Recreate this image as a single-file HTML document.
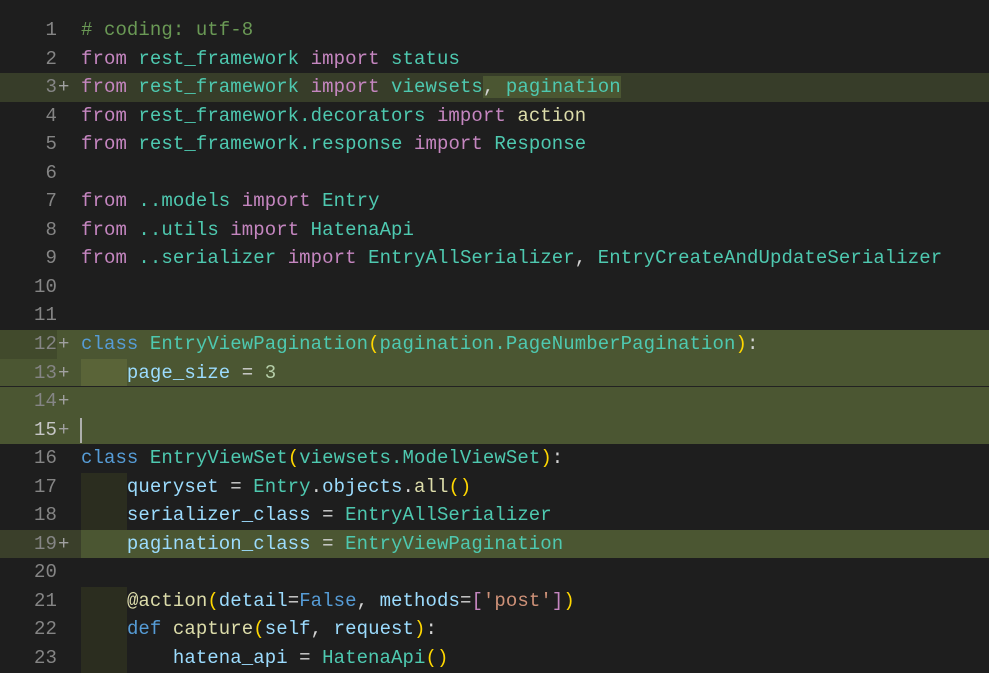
<!DOCTYPE html>
<html><head><meta charset="utf-8"><style>
html,body{margin:0;padding:0;background:#1e1e1e;width:989px;height:653px;overflow:hidden}
.ed{position:absolute;left:0;top:16px;width:989px;font-family:"Liberation Mono",monospace;font-size:19px;letter-spacing:0.08px}
.l{position:relative;height:28.55px;line-height:28.55px;white-space:pre;color:#9cdcfe}
.n{position:absolute;left:0;width:57px;text-align:right;color:#858585}
.p{position:absolute;left:58px;color:#a0a0a0}
.c{position:absolute;left:81px}
.k{color:#c586c0}.m{color:#4ec9b0}.f{color:#dcdcaa}.b{color:#569cd6}.cm{color:#6a9955}.num{color:#b5cea8}.s{color:#ce9178}.y{color:#ffd700}.w{color:#d4d4d4}
.ins{background:#373d29}
.ins2{background:#4b5632}
.g{position:absolute;left:81px;width:46px;top:0;bottom:0;background:#2b2d1f}
</style></head><body><div class="ed">
<div class="l"><span class="n">1</span><span class="c cm"># coding: utf-8</span></div>
<div class="l"><span class="n">2</span><span class="c"><span class="k">from</span> <span class="m">rest_framework</span> <span class="k">import</span> <span class="m">status</span></span></div>
<div class="l ins"><span class="n">3</span><span class="p">+</span><span class="c"><span class="k">from</span> <span class="m">rest_framework</span> <span class="k">import</span> <span class="m">viewsets</span><span class="ins2"><span class="w">,</span> <span class="m">pagination</span></span></span></div>
<div class="l"><span class="n">4</span><span class="c"><span class="k">from</span> <span class="m">rest_framework.decorators</span> <span class="k">import</span> <span class="f">action</span></span></div>
<div class="l"><span class="n">5</span><span class="c"><span class="k">from</span> <span class="m">rest_framework.response</span> <span class="k">import</span> <span class="m">Response</span></span></div>
<div class="l"><span class="n">6</span></div>
<div class="l"><span class="n">7</span><span class="c"><span class="k">from</span> <span class="m">..models</span> <span class="k">import</span> <span class="m">Entry</span></span></div>
<div class="l"><span class="n">8</span><span class="c"><span class="k">from</span> <span class="m">..utils</span> <span class="k">import</span> <span class="m">HatenaApi</span></span></div>
<div class="l"><span class="n">9</span><span class="c"><span class="k">from</span> <span class="m">..serializer</span> <span class="k">import</span> <span class="m">EntryAllSerializer</span><span class="w">,</span> <span class="m">EntryCreateAndUpdateSerializer</span></span></div>
<div class="l"><span class="n">10</span></div>
<div class="l"><span class="n">11</span></div>
<div class="l ins2" style="background:#4b5632"><span class="n" style="background:#414a2c">12</span><span class="p">+</span><span class="c"><span class="b">class</span> <span class="m">EntryViewPagination</span><span class="y">(</span><span class="m">pagination.PageNumberPagination</span><span class="y">)</span><span class="w">:</span></span></div>
<div class="l ins2" style="border-bottom:1px solid #222;height:27.55px"><span class="n">13</span><span class="p">+</span><span class="g" style="background:#5a6438"></span><span class="c">    page_size <span class="w">=</span> <span class="num">3</span></span></div>
<div class="l ins2"><span class="n">14</span><span class="p">+</span></div>
<div class="l ins2"><span class="n" style="color:#c6c6c6">15</span><span class="p">+</span><span style="position:absolute;left:80px;top:2px;width:2px;height:25px;background:#aeafad"></span></div>
<div class="l"><span class="n">16</span><span class="c"><span class="b">class</span> <span class="m">EntryViewSet</span><span class="y">(</span><span class="m">viewsets.ModelViewSet</span><span class="y">)</span><span class="w">:</span></span></div>
<div class="l"><span class="n">17</span><span class="g"></span><span class="c">    queryset <span class="w">=</span> <span class="m">Entry</span><span class="w">.</span>objects<span class="w">.</span><span class="f">all</span><span class="y">()</span></span></div>
<div class="l"><span class="n">18</span><span class="g"></span><span class="c">    serializer_class <span class="w">=</span> <span class="m">EntryAllSerializer</span></span></div>
<div class="l" style="background:#4b5632"><span class="n" style="background:#3a3f2a;width:81px;padding-right:0;text-align:left"><span style="display:inline-block;width:57px;text-align:right">19</span></span><span class="p">+</span><span class="c">    pagination_class <span class="w">=</span> <span class="m">EntryViewPagination</span></span></div>
<div class="l"><span class="n">20</span></div>
<div class="l"><span class="n">21</span><span class="g"></span><span class="c">    <span class="f">@action</span><span class="y">(</span>detail<span class="w">=</span><span class="b">False</span><span class="w">,</span> methods<span class="w">=</span><span class="k">[</span><span class="s">'post'</span><span class="k">]</span><span class="y">)</span></span></div>
<div class="l"><span class="n">22</span><span class="g"></span><span class="c">    <span class="b">def</span> <span class="f">capture</span><span class="y">(</span>self<span class="w">,</span> request<span class="y">)</span><span class="w">:</span></span></div>
<div class="l"><span class="n">23</span><span class="g"></span><span class="c">        hatena_api <span class="w">=</span> <span class="m">HatenaApi</span><span class="y">()</span></span></div>
</div></body></html>
